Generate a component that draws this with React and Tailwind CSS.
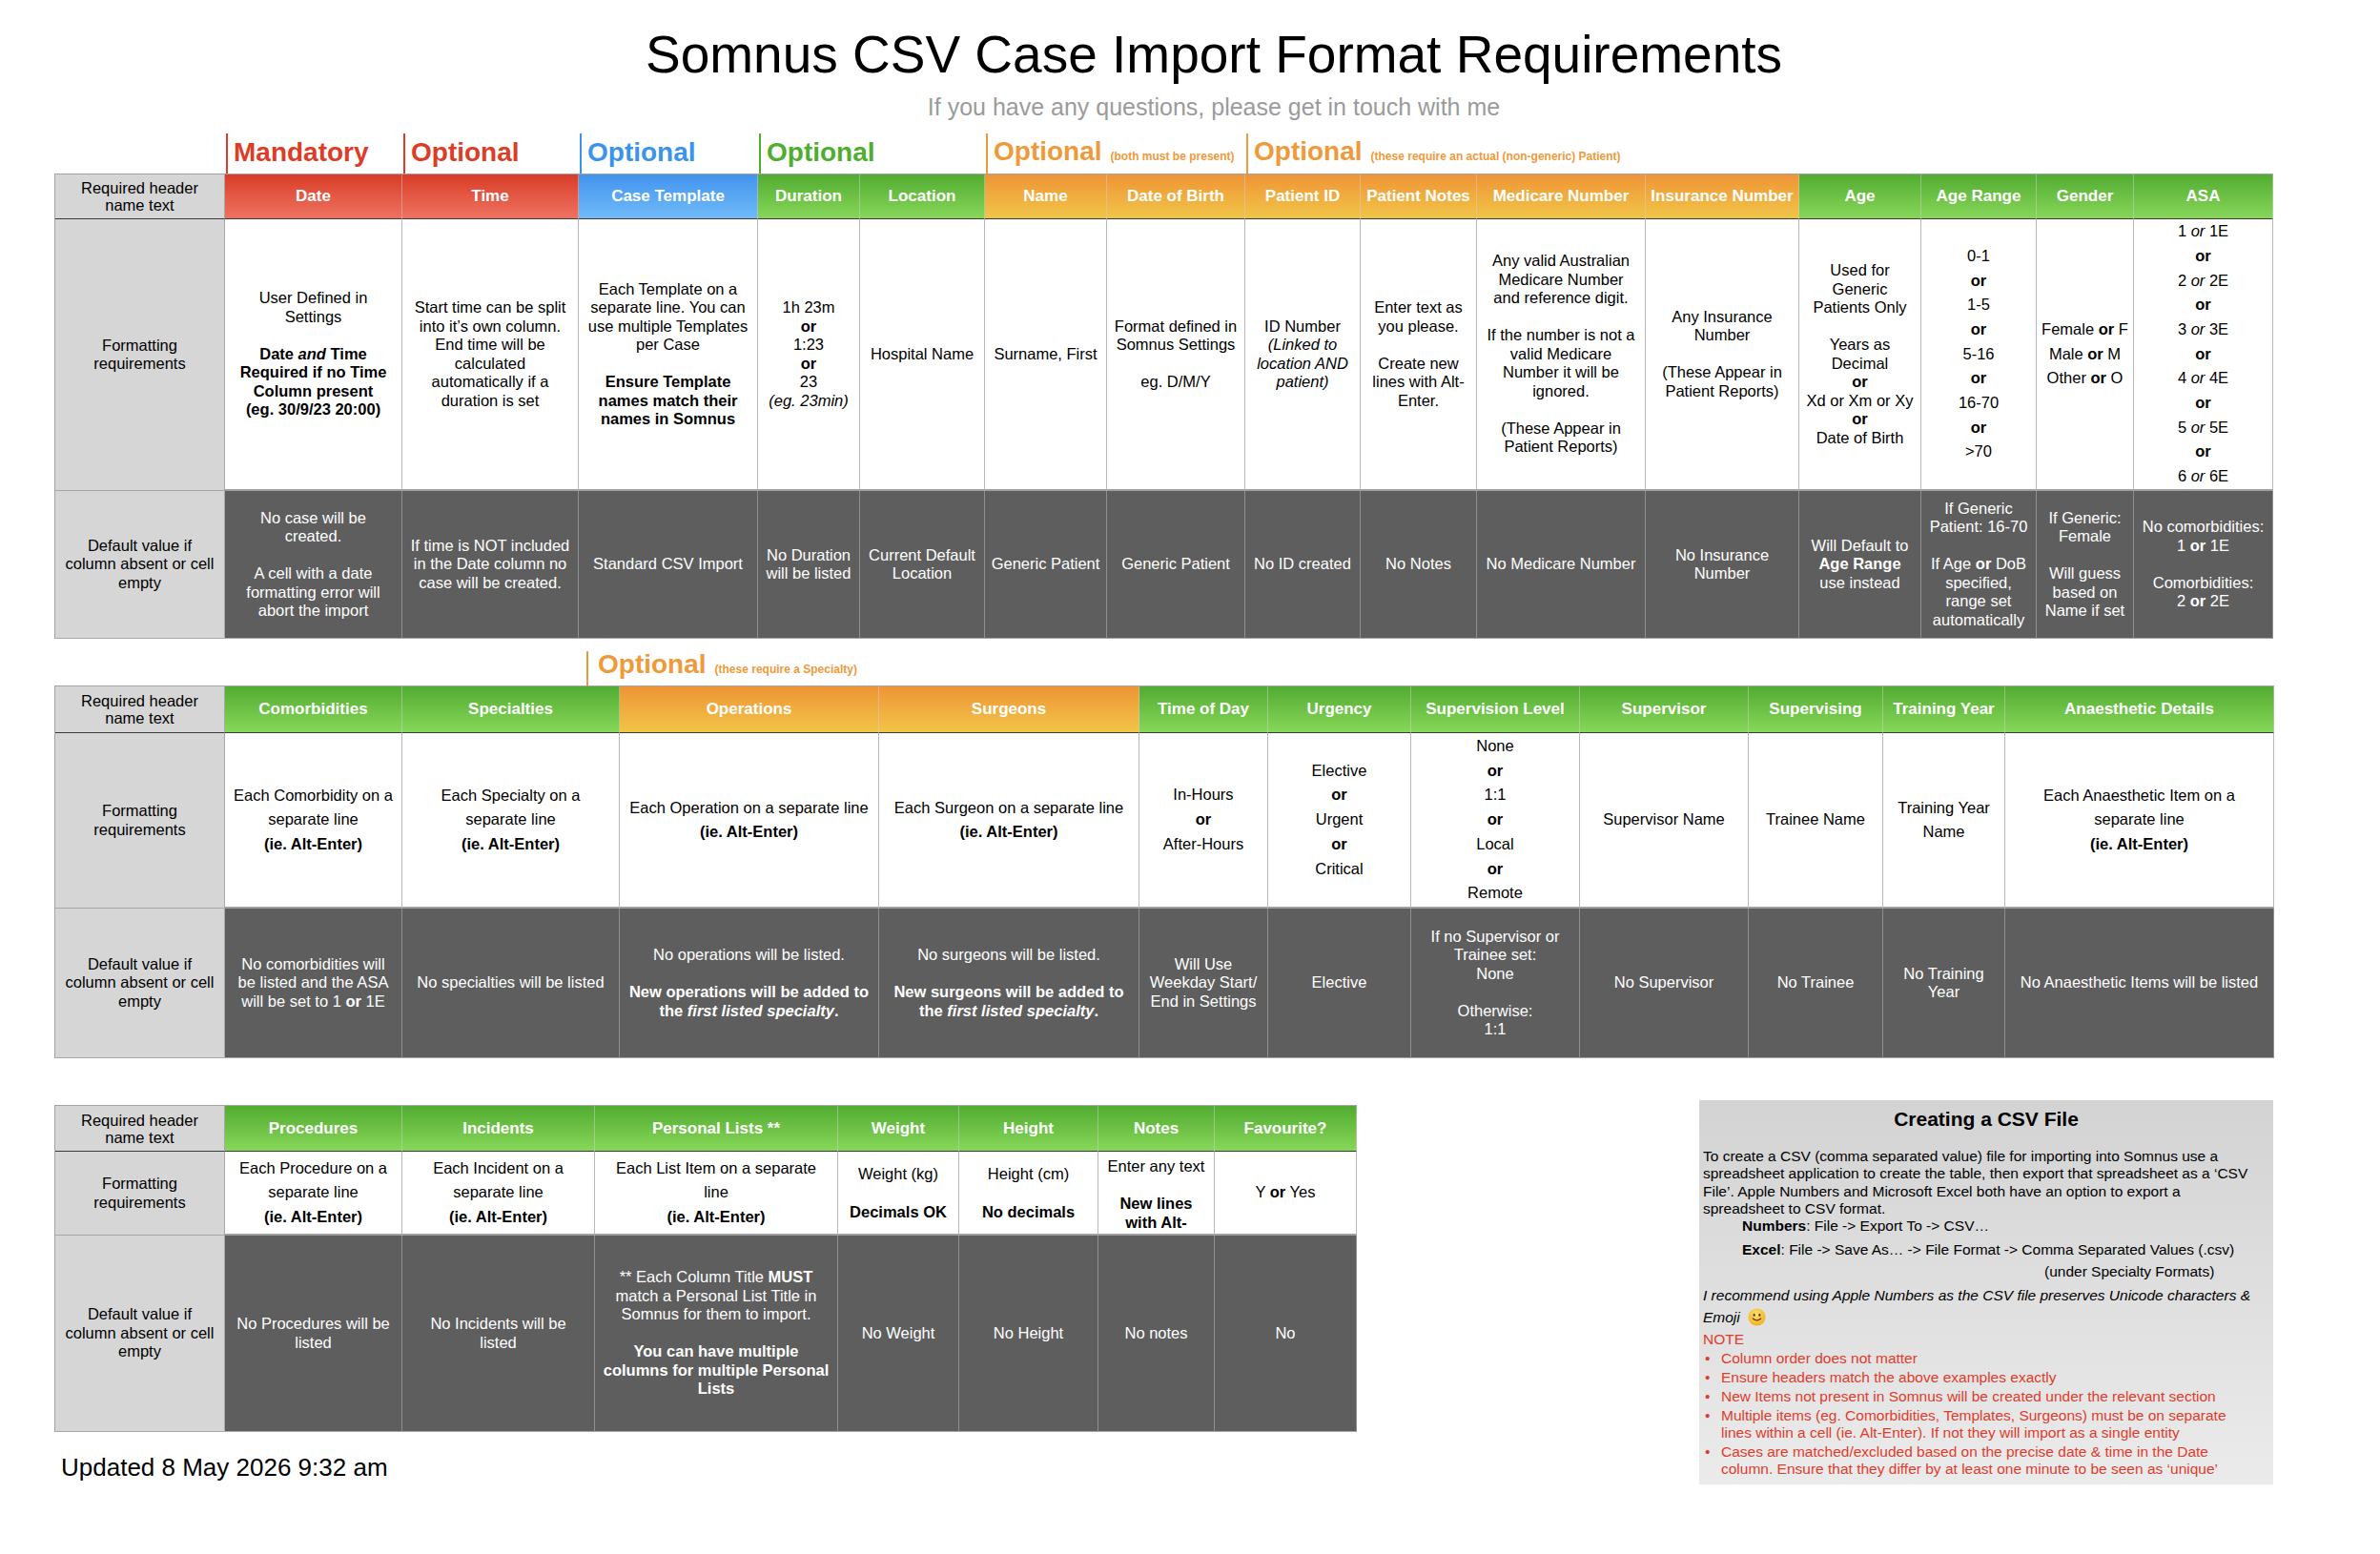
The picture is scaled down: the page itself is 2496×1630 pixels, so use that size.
import React from "react";

const grad = {
  red: "bg-linear-to-b from-[#d83b26] to-[#ee725f]",
  blue: "bg-linear-to-b from-[#4293ee] to-[#70bbf8]",
  green: "bg-linear-to-b from-[#51ac31] to-[#87d759]",
  orange: "bg-linear-to-b from-[#ee9436] to-[#f1c548]",
};

const cat = {
  red: "border-[#dc3d27] text-[#dc3d27]",
  blue: "border-[#3b93ea] text-[#3b93ea]",
  green: "border-[#4fae2f] text-[#4fae2f]",
  orange: "border-[#ef9a3a] text-[#ef9a3a]",
};

function Label({ children, head }) {
  return (
    <div
      className={
        head
          ? "flex items-center justify-center text-center bg-[#d6d6d6] border-r border-b border-r-[#a8a8a8] border-b-[#3a3a3a] text-[16.5px] leading-[18px]"
          : "flex items-center justify-center text-center bg-[#d6d6d6] border-r border-b border-[#a8a8a8] text-[16.5px] leading-[19.5px]"
      }
    >
      <div>{children}</div>
    </div>
  );
}

function Head({ c, children }) {
  return (
    <div
      className={`flex items-center justify-center whitespace-nowrap font-bold text-white text-[17px] border-r border-b border-r-[#d0d0d0]/50 border-b-[#3a3a3a] ${grad[c]}`}
    >
      {children}
    </div>
  );
}

function Fmt({ children, lh = "leading-[19.5px]", top }) {
  return (
    <div
      className={`flex ${top ? "items-start pt-[6px]" : "items-center"} justify-center text-center whitespace-nowrap overflow-hidden bg-white text-black text-[16.5px] border-r border-b-2 border-r-[#b8b8b8] border-b-[#a0a0a0] ${lh}`}
    >
      <div>{children}</div>
    </div>
  );
}

function Def({ children }) {
  return (
    <div className="flex items-center justify-center text-center whitespace-nowrap overflow-hidden bg-[#5e5e5e] text-white text-[16.5px] leading-[19.5px] border-r border-b border-r-[#8e8e8e] border-b-[#a3a3a3]">
      <div>{children}</div>
    </div>
  );
}

function Cat({ w, color, label = "Optional", note }) {
  return (
    <div className={w}>
      <div className={`ml-[2px] h-full border-l-2 flex items-end pb-[2px] pl-[6px] ${cat[color]}`}>
        <div className="leading-[32px] font-bold whitespace-nowrap">
          <span className="text-[28px]">{label}</span>
          {note && <span className="ml-[9px] text-[12px]">{note}</span>}
        </div>
      </div>
    </div>
  );
}

const Smiley = () => (
  <svg width="19" height="19" viewBox="0 0 20 20" className="inline-block align-[-4px] ml-[4px]">
    <defs>
      <radialGradient id="sg" cx="45%" cy="35%" r="65%">
        <stop offset="0%" stopColor="#ffe070" />
        <stop offset="100%" stopColor="#f2b11f" />
      </radialGradient>
    </defs>
    <circle cx="10" cy="10" r="9.5" fill="url(#sg)" />
    <ellipse cx="7" cy="7.6" rx="1.1" ry="1.6" fill="#5a3a10" />
    <ellipse cx="13" cy="7.6" rx="1.1" ry="1.6" fill="#5a3a10" />
    <path d="M5.6 11.6 Q10 15.6 14.4 11.6" stroke="#5a3a10" strokeWidth="1.3" fill="none" strokeLinecap="round" />
  </svg>
);

const Bullet = ({ children }) => (
  <div className="flex">
    <span className="w-[19px] pl-[2px]">•</span>
    <span>{children}</span>
  </div>
);

export default function App() {
  return (
    <div className="w-[2496px] h-[1630px] overflow-hidden bg-white text-black font-['Liberation_Sans',Arial,sans-serif]">
      {/* title */}
      <div className="pt-[25px] pl-[50px] text-center text-[55px] leading-[64px]">
        Somnus CSV Case Import Format Requirements
      </div>
      <div className="mt-[8px] pl-[50px] text-center text-[25px] leading-[30px] text-[#9b9b9b]">
        If you have any questions, please get in touch with me
      </div>

      <div className="pl-[57px]">
        {/* table 1 categories */}
        <div className="mt-[13px] h-[42px] flex">
          <div className="w-[178px]" />
          <Cat w="w-[186px]" color="red" label="Mandatory" />
          <Cat w="w-[185px]" color="red" />
          <Cat w="w-[188px]" color="blue" />
          <Cat w="w-[238px]" color="green" />
          <Cat w="w-[273px]" color="orange" note="(both must be present)" />
          <Cat w="w-[1078px]" color="orange" note="(these require an actual (non-generic) Patient)" />
        </div>

        {/* table 1 */}
        <div className="grid w-max border-l border-t border-[#a3a3a3] grid-cols-[178px_186px_185px_188px_107px_131px_128px_145px_121px_122px_177px_161px_128px_121px_102px_146px] grid-rows-[47px_285px_155px]">
          <Label head>Required header<br />name text</Label>
          <Head c="red">Date</Head>
          <Head c="red">Time</Head>
          <Head c="blue">Case Template</Head>
          <Head c="green">Duration</Head>
          <Head c="green">Location</Head>
          <Head c="orange">Name</Head>
          <Head c="orange">Date of Birth</Head>
          <Head c="orange">Patient ID</Head>
          <Head c="orange">Patient Notes</Head>
          <Head c="orange">Medicare Number</Head>
          <Head c="orange">Insurance Number</Head>
          <Head c="green">Age</Head>
          <Head c="green">Age Range</Head>
          <Head c="green">Gender</Head>
          <Head c="green">ASA</Head>

          <Label>Formatting<br />requirements</Label>
          <Fmt>
            User Defined in<br />Settings<br /><br />
            <b>Date <i>and</i> Time<br />Required if no Time<br />Column present<br />(eg. 30/9/23 20:00)</b>
          </Fmt>
          <Fmt>
            Start time can be split<br />into it’s own column.<br />End time will be<br />calculated<br />automatically if a<br />duration is set
          </Fmt>
          <Fmt>
            Each Template on a<br />separate line. You can<br />use multiple Templates<br />per Case<br /><br />
            <b>Ensure Template<br />names match their<br />names in Somnus</b>
          </Fmt>
          <Fmt>
            1h 23m<br /><b>or</b><br />1:23<br /><b>or</b><br />23<br /><i>(eg. 23min)</i>
          </Fmt>
          <Fmt>Hospital Name</Fmt>
          <Fmt>Surname, First</Fmt>
          <Fmt>
            Format defined in<br />Somnus Settings<br /><br />eg. D/M/Y
          </Fmt>
          <Fmt>
            ID Number<br /><i>(Linked to<br />location AND<br />patient)</i>
          </Fmt>
          <Fmt>
            Enter text as<br />you please.<br /><br />Create new<br />lines with Alt-<br />Enter.
          </Fmt>
          <Fmt>
            Any valid Australian<br />Medicare Number<br />and reference digit.<br /><br />
            If the number is not a<br />valid Medicare<br />Number it will be<br />ignored.<br /><br />
            (These Appear in<br />Patient Reports)
          </Fmt>
          <Fmt>
            Any Insurance<br />Number<br /><br />(These Appear in<br />Patient Reports)
          </Fmt>
          <Fmt>
            Used for<br />Generic<br />Patients Only<br /><br />Years as<br />Decimal<br /><b>or</b><br />Xd or Xm or Xy<br /><b>or</b><br />Date of Birth
          </Fmt>
          <Fmt lh="leading-[25.7px]">
            0-1<br /><b>or</b><br />1-5<br /><b>or</b><br />5-16<br /><b>or</b><br />16-70<br /><b>or</b><br />&gt;70
          </Fmt>
          <Fmt lh="leading-[25.7px]">
            Female <b>or</b> F<br />Male <b>or</b> M<br />Other <b>or</b> O
          </Fmt>
          <Fmt lh="leading-[25.7px]">
            1 <i>or</i> 1E<br /><b>or</b><br />2 <i>or</i> 2E<br /><b>or</b><br />3 <i>or</i> 3E<br /><b>or</b><br />
            4 <i>or</i> 4E<br /><b>or</b><br />5 <i>or</i> 5E<br /><b>or</b><br />6 <i>or</i> 6E
          </Fmt>

          <Label>Default value if<br />column absent or cell<br />empty</Label>
          <Def>
            No case will be<br />created.<br /><br />A cell with a date<br />formatting error will<br />abort the import
          </Def>
          <Def>
            If time is NOT included<br />in the Date column no<br />case will be created.
          </Def>
          <Def>Standard CSV Import</Def>
          <Def>No Duration<br />will be listed</Def>
          <Def>Current Default<br />Location</Def>
          <Def>Generic Patient</Def>
          <Def>Generic Patient</Def>
          <Def>No ID created</Def>
          <Def>No Notes</Def>
          <Def>No Medicare Number</Def>
          <Def>No Insurance<br />Number</Def>
          <Def>
            Will Default to<br /><b>Age Range</b><br />use instead
          </Def>
          <Def>
            If Generic<br />Patient: 16-70<br /><br />If Age <b>or</b> DoB<br />specified,<br />range set<br />automatically
          </Def>
          <Def>
            If Generic:<br />Female<br /><br />Will guess<br />based on<br />Name if set
          </Def>
          <Def>
            No comorbidities:<br />1 <b>or</b> 1E<br /><br />Comorbidities:<br />2 <b>or</b> 2E
          </Def>
        </div>

        {/* table 2 categories */}
        <div className="mt-[13px] h-[36px] flex">
          <div className="w-[558px]" />
          <div className="flex-1">
            <div className={`h-full border-l-2 flex items-end pl-[10px] pb-[1px] ${cat.orange}`}>
              <div className="leading-[32px] font-bold whitespace-nowrap">
                <span className="text-[28px]">Optional</span>
                <span className="ml-[9px] text-[12px]">(these require a Specialty)</span>
              </div>
            </div>
          </div>
        </div>

        {/* table 2 */}
        <div className="grid w-max border-l border-t border-[#a3a3a3] grid-cols-[178px_186px_228px_272px_273px_135px_150px_177px_177px_141px_128px_282px] grid-rows-[49px_184px_157px]">
          <Label head>Required header<br />name text</Label>
          <Head c="green">Comorbidities</Head>
          <Head c="green">Specialties</Head>
          <Head c="orange">Operations</Head>
          <Head c="orange">Surgeons</Head>
          <Head c="green">Time of Day</Head>
          <Head c="green">Urgency</Head>
          <Head c="green">Supervision Level</Head>
          <Head c="green">Supervisor</Head>
          <Head c="green">Supervising</Head>
          <Head c="green">Training Year</Head>
          <Head c="green">Anaesthetic Details</Head>

          <Label>Formatting<br />requirements</Label>
          <Fmt lh="leading-[25.5px]">
            Each Comorbidity on a<br />separate line<br /><b>(ie. Alt-Enter)</b>
          </Fmt>
          <Fmt lh="leading-[25.5px]">
            Each Specialty on a<br />separate line<br /><b>(ie. Alt-Enter)</b>
          </Fmt>
          <Fmt lh="leading-[25.5px]">
            Each Operation on a separate line<br /><b>(ie. Alt-Enter)</b>
          </Fmt>
          <Fmt lh="leading-[25.5px]">
            Each Surgeon on a separate line<br /><b>(ie. Alt-Enter)</b>
          </Fmt>
          <Fmt lh="leading-[25.7px]">
            In-Hours<br /><b>or</b><br />After-Hours
          </Fmt>
          <Fmt lh="leading-[25.7px]">
            Elective<br /><b>or</b><br />Urgent<br /><b>or</b><br />Critical
          </Fmt>
          <Fmt lh="leading-[25.7px]">
            None<br /><b>or</b><br />1:1<br /><b>or</b><br />Local<br /><b>or</b><br />Remote
          </Fmt>
          <Fmt>Supervisor Name</Fmt>
          <Fmt>Trainee Name</Fmt>
          <Fmt lh="leading-[25px]">
            Training Year<br />Name
          </Fmt>
          <Fmt lh="leading-[25.5px]">
            Each Anaesthetic Item on a<br />separate line<br /><b>(ie. Alt-Enter)</b>
          </Fmt>

          <Label>Default value if<br />column absent or cell<br />empty</Label>
          <Def>
            No comorbidities will<br />be listed and the ASA<br />will be set to 1 <b>or</b> 1E
          </Def>
          <Def>No specialties will be listed</Def>
          <Def>
            No operations will be listed.<br /><br />
            <b>New operations will be added to<br />the <i>first listed specialty</i>.</b>
          </Def>
          <Def>
            No surgeons will be listed.<br /><br />
            <b>New surgeons will be added to<br />the <i>first listed specialty</i>.</b>
          </Def>
          <Def>
            Will Use<br />Weekday Start/<br />End in Settings
          </Def>
          <Def>Elective</Def>
          <Def>
            If no Supervisor or<br />Trainee set:<br />None<br /><br />Otherwise:<br />1:1
          </Def>
          <Def>No Supervisor</Def>
          <Def>No Trainee</Def>
          <Def>No Training<br />Year</Def>
          <Def>No Anaesthetic Items will be listed</Def>
        </div>

        {/* bottom section */}
        <div className="mt-[44px] w-[2327px] flex justify-between">
          <div className="pt-[5px]">
            <div className="grid w-max border-l border-t border-[#a3a3a3] grid-cols-[178px_186px_202px_255px_127px_146px_122px_149px] grid-rows-[48px_88px_206px]">
              <Label head>Required header<br />name text</Label>
              <Head c="green">Procedures</Head>
              <Head c="green">Incidents</Head>
              <Head c="green">Personal Lists **</Head>
              <Head c="green">Weight</Head>
              <Head c="green">Height</Head>
              <Head c="green">Notes</Head>
              <Head c="green">Favourite?</Head>

              <Label>Formatting<br />requirements</Label>
              <Fmt lh="leading-[25.3px]">
                Each Procedure on a<br />separate line<br /><b>(ie. Alt-Enter)</b>
              </Fmt>
              <Fmt lh="leading-[25.3px]">
                Each Incident on a<br />separate line<br /><b>(ie. Alt-Enter)</b>
              </Fmt>
              <Fmt lh="leading-[25.3px]">
                Each List Item on a separate<br />line<br /><b>(ie. Alt-Enter)</b>
              </Fmt>
              <Fmt lh="leading-[20px]">
                Weight (kg)<br /><br /><b>Decimals OK</b>
              </Fmt>
              <Fmt lh="leading-[20px]">
                Height (cm)<br /><br /><b>No decimals</b>
              </Fmt>
              <Fmt lh="leading-[19.5px]" top>
                Enter any text<br /><br /><b>New lines<br />with Alt-</b>
              </Fmt>
              <Fmt>
                Y <b>or</b> Yes
              </Fmt>

              <Label>Default value if<br />column absent or cell<br />empty</Label>
              <Def>No Procedures will be<br />listed</Def>
              <Def>No Incidents will be<br />listed</Def>
              <Def>
                ** Each Column Title <b>MUST</b><br />match a Personal List Title in<br />Somnus for them to import.<br /><br />
                <b>You can have multiple<br />columns for multiple Personal<br />Lists</b>
              </Def>
              <Def>No Weight</Def>
              <Def>No Height</Def>
              <Def>No notes</Def>
              <Def>No</Def>
            </div>
            <div className="mt-[22px] pl-[7px] text-[26px] leading-[30px]">Updated 8 May 2026 9:32 am</div>
          </div>

          {/* CSV help box */}
          <div className="w-[602px] h-[403px] bg-linear-to-b from-[#d3d3d3] to-[#ebebeb] px-[4px] text-[15.5px] leading-[18.3px] whitespace-nowrap">
            <div className="pt-[7px] text-center font-bold text-[21px] leading-[26px]">Creating a CSV File</div>
            <div className="mt-[17px]">
              To create a CSV (comma separated value) file for importing into Somnus use a<br />
              spreadsheet application to create the table, then export that spreadsheet as a ‘CSV<br />
              File’. Apple Numbers and Microsoft Excel both have an option to export a<br />
              spreadsheet to CSV format.
            </div>
            <div className="pl-[41px] leading-[18px]">
              <b>Numbers</b>: File -&gt; Export To -&gt; CSV…
            </div>
            <div className="mt-[7px] pl-[41px] leading-[18px]">
              <b>Excel</b>: File -&gt; Save As… -&gt; File Format -&gt; Comma Separated Values (.csv)
            </div>
            <div className="mt-[5px] pl-[358px] leading-[18px]">(under Specialty Formats)</div>
            <div className="mt-[4px] italic leading-[23px]">
              I recommend using Apple Numbers as the CSV file preserves Unicode characters &amp;<br />
              Emoji <Smiley />
            </div>
            <div className="text-[#df3c2d] leading-[23px]">NOTE</div>
            <div className="text-[#df3c2d] leading-[18px] flex flex-col gap-[2px]">
              <Bullet>Column order does not matter</Bullet>
              <Bullet>Ensure headers match the above examples exactly</Bullet>
              <Bullet>New Items not present in Somnus will be created under the relevant section</Bullet>
              <Bullet>
                Multiple items (eg. Comorbidities, Templates, Surgeons) must be on separate<br />
                lines within a cell (ie. Alt-Enter). If not they will import as a single entity
              </Bullet>
              <Bullet>
                Cases are matched/excluded based on the precise date &amp; time in the Date<br />
                column. Ensure that they differ by at least one minute to be seen as ‘unique’
              </Bullet>
            </div>
          </div>
        </div>
      </div>
    </div>
  );
}
